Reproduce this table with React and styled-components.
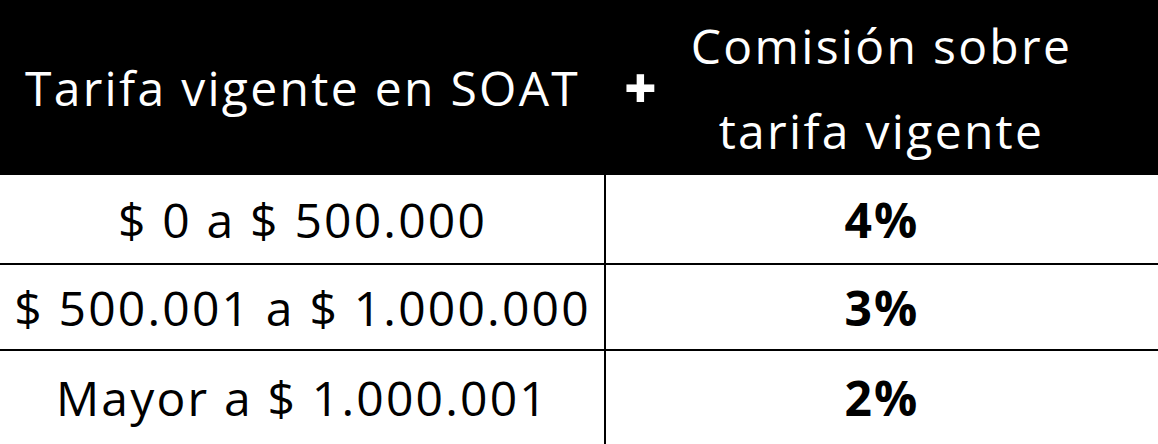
import React from 'react'
import styled, { createGlobalStyle } from 'styled-components'

const Global = createGlobalStyle`
  html, body {
    margin: 0;
    padding: 0;
    background: #ffffff;
  }
  body {
    font-family: "Open Sans", "Liberation Sans", sans-serif;
  }
`

const Table = styled.div`
  width: 1158px;
  height: 444px;
  display: grid;
  grid-template-columns: 605px 1fr;
  grid-template-rows: 175px 88px 86px 1fr;
  overflow: hidden;
`

const HeadCell = styled.div`
  position: relative;
  background: #000;
  color: #fff;
  display: flex;
  align-items: center;
  justify-content: center;
  text-align: center;
  font-size: 48px;
  font-weight: 500;
  line-height: 85px;
  letter-spacing: 2.3px;
`

const Plus = styled.span`
  position: absolute;
  left: 19px;
  top: 50%;
  transform: translateY(-54%);
  font-size: 56px;
  font-weight: 800;
  line-height: 1;
  letter-spacing: 0;
`

const Cell = styled.div`
  display: flex;
  align-items: center;
  justify-content: center;
  color: #000;
  font-size: 48px;
  font-weight: ${p => (p.bold ? 700 : 500)};
  letter-spacing: 2.2px;
  border-left: ${p => (p.right ? '2px solid #000' : 'none')};
  border-top: ${p => (p.first ? 'none' : '2px solid #000')};
  margin-left: ${p => (p.right ? '-1px' : '0')};
`

const rows = [
  { range: '$ 0 a $ 500.000', pct: '4%' },
  { range: '$ 500.001 a $ 1.000.000', pct: '3%' },
  { range: 'Mayor a $ 1.000.001', pct: '2%' },
]

export default function App() {
  return (
    <>
      <Global />
      <Table>
        <HeadCell>Tarifa vigente en SOAT</HeadCell>
        <HeadCell>
          <Plus>+</Plus>
          <span>Comisión sobre<br />tarifa vigente</span>
        </HeadCell>
        {rows.map((r, i) => (
          <React.Fragment key={r.pct}>
            <Cell first={i === 0}>{r.range}</Cell>
            <Cell first={i === 0} right bold>{r.pct}</Cell>
          </React.Fragment>
        ))}
      </Table>
    </>
  )
}
